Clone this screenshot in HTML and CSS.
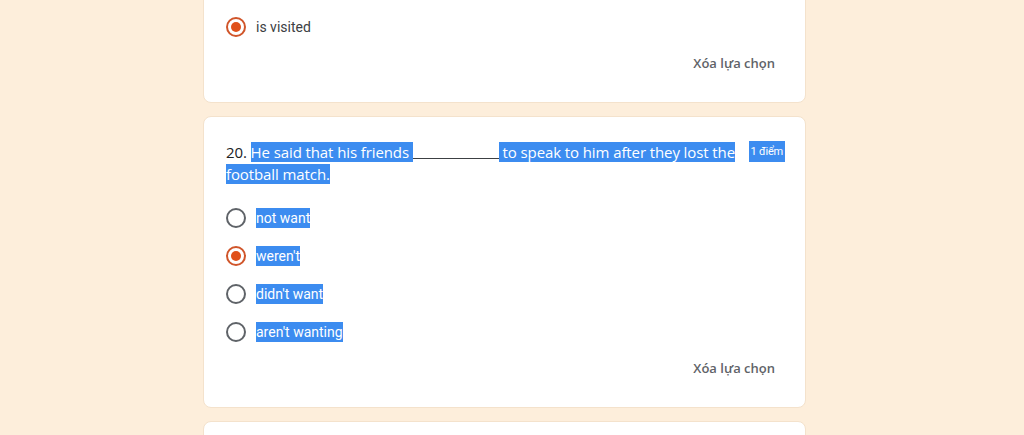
FILE: index.html
```html
<!DOCTYPE html>
<html lang="vi">
  <head>
    <meta charset="UTF-8" />
    <meta name="viewport" content="width=device-width, initial-scale=1.0" />
    <title>Bài kiểm tra</title>
    <link rel="stylesheet" href="styles.css">
  </head>
  <body>
    <div class="page">
      <div class="card card-first">
        <div class="options">
          <label class="option">
            <span class="radio checked"></span>
            <span class="opt-text">is visited</span>
          </label>
        </div>
        <div class="footer">
          <button type="button" class="clear">Xóa lựa chọn</button>
        </div>
      </div>

      <div class="card">
        <div class="question">
          <div class="q-text">20. <span class="sel">He said that his friends </span><span class="blank"></span><span class="sel"> to speak to him after they lost the </span><span class="sel">football match.</span></div>
          <div class="points"><span class="sel">1 điểm</span></div>
        </div>
        <div class="options">
          <label class="option">
            <span class="radio"></span>
            <span class="opt-text sel">not want</span>
          </label>
          <label class="option">
            <span class="radio checked"></span>
            <span class="opt-text sel">weren't</span>
          </label>
          <label class="option">
            <span class="radio"></span>
            <span class="opt-text sel">didn't want</span>
          </label>
          <label class="option">
            <span class="radio"></span>
            <span class="opt-text sel">aren't wanting</span>
          </label>
        </div>
        <div class="footer">
          <button type="button" class="clear">Xóa lựa chọn</button>
        </div>
      </div>

      <div class="card card-last"></div>
    </div>
  </body>
</html>
```

FILE: styles.css
```css
body {
  margin: 0;
  background: #fdeedb;
  font-family: Roboto, Arial, sans-serif;
  color: #202124;
  overflow: hidden;
}

.page {
  width: 603px;
  margin-left: 203px;
  display: flex;
  flex-direction: column;
  gap: 13px;
}

.card {
  background: #fff;
  border: 1px solid #f4e2cc;
  border-radius: 8px;
  padding: 24px 24px 22px 22px;
}

.card-first {
  margin-top: -17px;
}

.card-last {
  height: 60px;
}

.sel {
  background: #3c8cf0;
  color: #fff;
}

.question {
  display: flex;
  align-items: flex-start;
  gap: 8px;
  margin-right: -4px;
}

.q-text {
  flex: 1;
  font-family: "Open Sans", Arial, sans-serif;
  font-size: 15px;
  line-height: 22px;
  letter-spacing: -0.1px;
  color: #202124;
}

.blank {
  display: inline-block;
  width: 86px;
  height: 14px;
  border-bottom: 1px solid #3c4043;
  vertical-align: -1px;
}

.points {
  font-size: 11px;
  line-height: 21px;
  letter-spacing: -0.2px;
}

.points .sel {
  display: inline-block;
  padding: 0 2px;
}

.options {
  margin-top: 14px;
  display: flex;
  flex-direction: column;
}

.card-first .options {
  margin-top: 0;
}

.option {
  display: flex;
  align-items: center;
  height: 38px;
  gap: 10px;
}

.radio {
  width: 16px;
  height: 16px;
  border: 2px solid #5f6368;
  border-radius: 50%;
  position: relative;
  box-sizing: content-box;
}

.radio.checked {
  border-color: #d0552a;
}

.radio.checked::after {
  content: "";
  position: absolute;
  left: 3px;
  top: 3px;
  width: 10px;
  height: 10px;
  border-radius: 50%;
  background: #e0501a;
}

.opt-text {
  font-size: 14px;
  line-height: 20px;
  color: #3c4043;
}

.opt-text.sel {
  color: #fff;
}

.footer {
  display: flex;
  justify-content: flex-end;
}

.clear {
  font-family: "Open Sans", Arial, sans-serif;
  font-size: 13px;
  font-weight: 600;
  color: #5f6368;
  background: none;
  border: 0;
  height: 34px;
  padding: 0 6px;
}
```
